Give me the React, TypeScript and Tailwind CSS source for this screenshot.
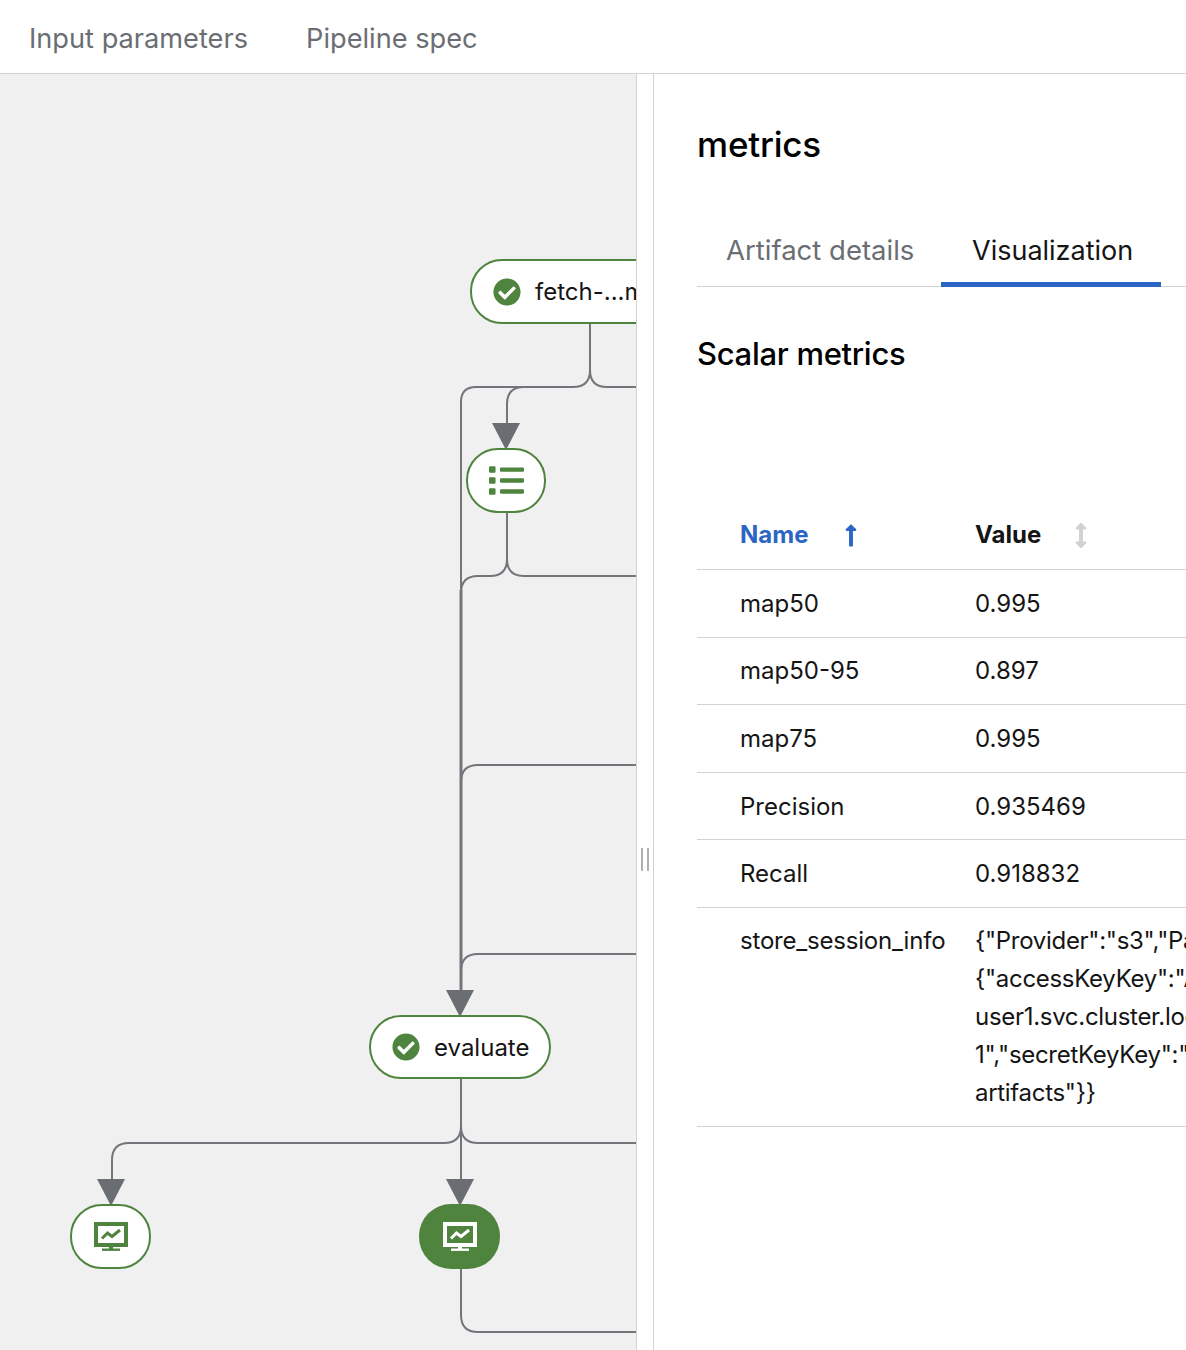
import { FaArrowsAltV, FaCheckCircle, FaList, FaLongArrowAltUp } from 'react-icons/fa';

const rows = [
  { name: 'map50', value: '0.995' },
  { name: 'map50-95', value: '0.897' },
  { name: 'map75', value: '0.995' },
  { name: 'Precision', value: '0.935469' },
  { name: 'Recall', value: '0.918832' },
];

const sessionLines = [
  '{"Provider":"s3","Params":',
  '{"accessKeyKey":"AWS_ACCESS_KEY_ID",',
  'user1.svc.cluster.local:9000",',
  '1","secretKeyKey":"AWS_SECRET",',
  'artifacts"}}',
];

const edges = [
  'M590 323V370Q590 387 573 387H476Q461 387 461 402V992',
  'M524 387Q507 387 507 404V426',
  'M590 370Q590 387 607 387H636',
  'M507 513V559Q507 576 490 576H478Q461 576 461 593',
  'M507 559Q507 576 524 576H636',
  'M636 765H478Q461 765 461 782',
  'M636 954H478Q461 954 461 971',
  'M461 1079V1126Q461 1143 444 1143H129Q112 1143 112 1160V1181',
  'M461 1126Q461 1143 478 1143H636',
  'M461 1126V1181',
  'M461 1269V1315Q461 1332 478 1332H636',
];

function MonitorIcon({ className }: { className: string }) {
  return (
    <svg className={className} viewBox="0 0 34 29" fill="none" stroke="currentColor">
      <rect x="2" y="2" width="30" height="21" strokeWidth="4" />
      <path d="M8 16.5L13.5 11L18 14.5L26 8" strokeWidth="3" />
      <path d="M17 24V27" strokeWidth="4" />
      <path d="M8 27.7H26" strokeWidth="2.4" />
    </svg>
  );
}

function Graph() {
  return (
    <div className="relative w-[636px] shrink-0 overflow-hidden bg-[#f0f0f0]">
      <svg className="absolute left-0 top-0" width="636" height="1276" viewBox="0 74 636 1276" fill="none">
        {edges.map((d) => (
          <path key={d} d={d} stroke="#72767b" strokeWidth="2" />
        ))}
        <path d="M461 590V992" stroke="#72767b" strokeWidth="3" />
        <path d="M492 423H520L506 450Z" fill="#6a6e73" />
        <path d="M446 990H474L460 1017Z" fill="#6a6e73" />
        <path d="M97 1179H125L111 1206Z" fill="#6a6e73" />
        <path d="M446 1179H474L460 1206Z" fill="#6a6e73" />
      </svg>

      <div className="absolute left-[470px] top-[185px] flex h-[65px] w-[260px] items-center rounded-[32px] border-2 border-[#4f843f] bg-white pl-[21px]">
        <FaCheckCircle className="h-[28px] w-[28px] text-[#4f843f]" />
        <span className="ml-[14px] whitespace-nowrap pt-px text-[24px] text-[#151515]">fetch-...model</span>
      </div>

      <div className="absolute left-[466px] top-[374px] flex h-[65px] w-[80px] items-center justify-center rounded-[32px] border-2 border-[#4f843f] bg-white">
        <FaList className="h-[35px] w-[35px] text-[#4f843f]" />
      </div>

      <div className="absolute left-[369px] top-[941px] flex h-[64px] w-[182px] items-center rounded-[32px] border-2 border-[#4f843f] bg-white pl-[21px]">
        <FaCheckCircle className="h-[28px] w-[28px] text-[#4f843f]" />
        <span className="ml-[14px] pt-px text-[24px] text-[#151515]">evaluate</span>
      </div>

      <div className="absolute left-[70px] top-[1130px] flex h-[65px] w-[81px] items-center justify-center rounded-[32px] border-2 border-[#4f843f] bg-white">
        <MonitorIcon className="h-[29px] w-[34px] text-[#4f843f]" />
      </div>

      <div className="absolute left-[419px] top-[1130px] flex h-[65px] w-[81px] items-center justify-center rounded-[32px] bg-[#4f843f]">
        <MonitorIcon className="h-[29px] w-[34px] text-white" />
      </div>
    </div>
  );
}

export default function App() {
  return (
    <div className="flex h-[1350px] w-[1186px] flex-col overflow-hidden bg-white font-['Inter',sans-serif] text-[#151515]">
      <div className="flex h-[74px] shrink-0 items-center gap-[58px] border-b border-[#d2d2d2] pl-[29px] pt-[5px] text-[27.2px] text-[#6a6e73]">
        <span>Input parameters</span>
        <span>Pipeline spec</span>
      </div>

      <div className="flex min-h-0 flex-1">
        <Graph />

        <div className="flex w-[18px] shrink-0 items-start justify-center gap-[4px] border-x border-[#d2d2d2] pt-[774px]">
          <div className="h-[23px] w-[2px] bg-[#b0b0b0]" />
          <div className="h-[23px] w-[2px] bg-[#b0b0b0]" />
        </div>

        <div className="min-w-0 flex-1 overflow-hidden pl-[43px]">
          <h1 className="mt-[44px] text-[35px] font-medium leading-[52px] tracking-[-0.2px] text-black">metrics</h1>

          <div className="mt-[39px] flex h-[78px] border-b border-[#d2d2d2] text-[27px]">
            <div className="flex w-[244px] items-center pl-[29px] pt-[6px] text-[27.5px] text-[#6a6e73]">Artifact details</div>
            <div className="-mb-px flex w-[220px] items-center border-b-[5px] border-[#2b66c4] pl-[31px] pt-[12px]">Visualization</div>
          </div>

          <h2 className="mt-[44px] text-[31px] font-medium leading-[46px] tracking-[-0.3px] text-black">Scalar metrics</h2>

          <table className="mt-[120px] w-[600px] table-fixed border-collapse text-[24px]">
            <thead>
              <tr className="h-[72.5px] border-b border-[#d2d2d2] font-semibold">
                <th className="w-[278px] pl-[43px] pt-[4px] text-left text-[#2b66c4]">
                  <span className="inline-flex items-center gap-[36px]">
                    Name
                    <FaLongArrowAltUp className="h-[25px] w-[14px]" />
                  </span>
                </th>
                <th className="pt-[4px] text-left">
                  <span className="inline-flex items-center gap-[33px]">
                    Value
                    <FaArrowsAltV className="h-[25px] w-[14px] text-[#d2d2d2]" />
                  </span>
                </th>
              </tr>
            </thead>
            <tbody>
              {rows.map((row) => (
                <tr key={row.name} className="h-[67.6px] border-b border-[#d2d2d2]">
                  <td className="pl-[43px] pt-px">{row.name}</td>
                  <td className="pt-px">{row.value}</td>
                </tr>
              ))}
              <tr className="border-b border-[#d2d2d2]">
                <td className="pb-[14px] pl-[43px] pt-[14px] align-top leading-[38px] tracking-[-0.2px]">store_session_info</td>
                <td className="pb-[14px] pt-[14px] align-top leading-[38px] tracking-[-0.3px]">
                  {sessionLines.map((line) => (
                    <div key={line} className="whitespace-nowrap">
                      {line}
                    </div>
                  ))}
                </td>
              </tr>
            </tbody>
          </table>
        </div>
      </div>
    </div>
  );
}
